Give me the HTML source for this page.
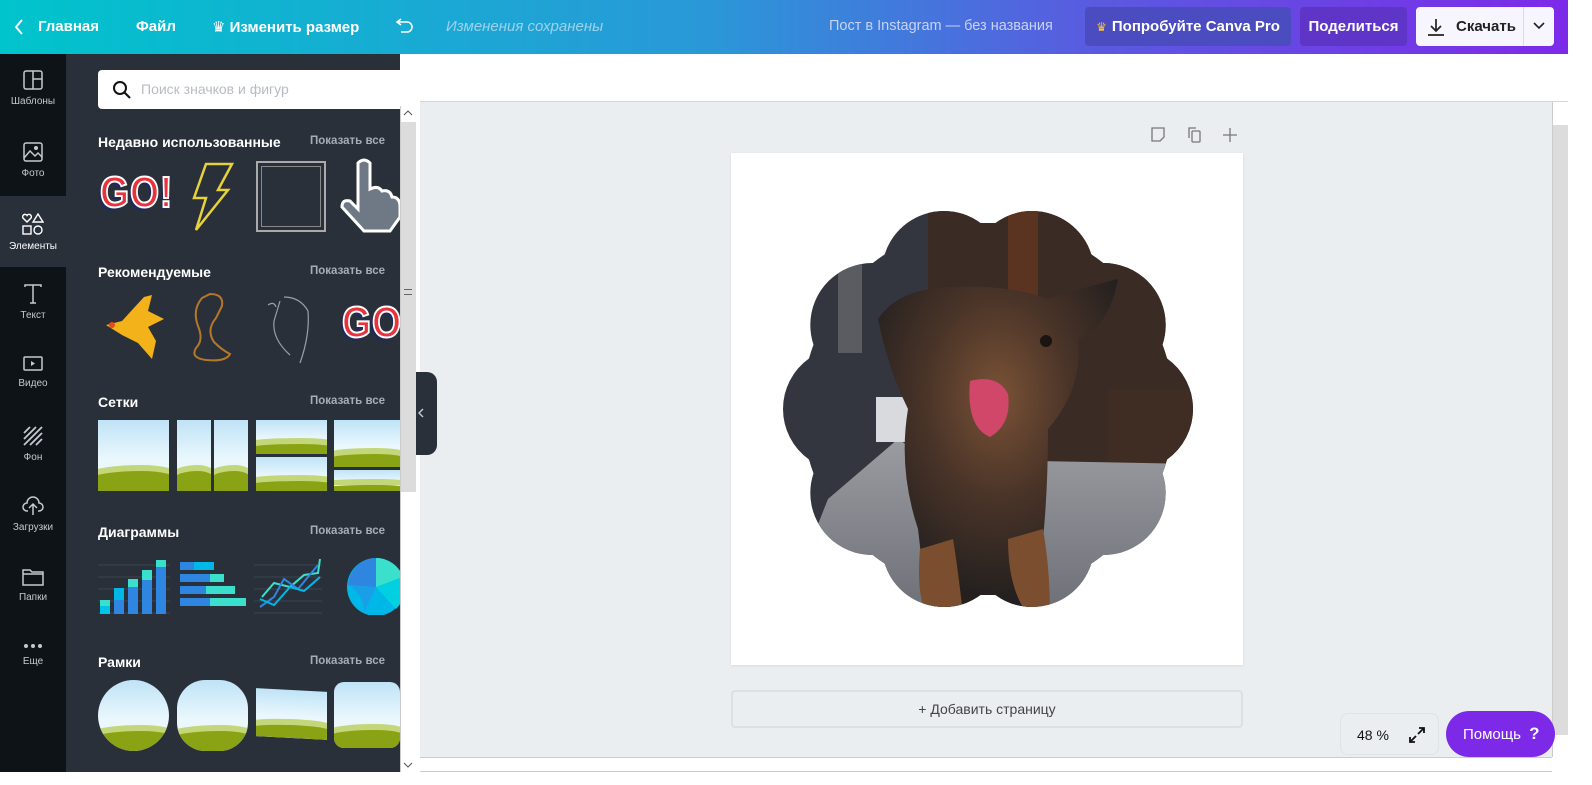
<!DOCTYPE html>
<html><head><meta charset="utf-8">
<style>
*{box-sizing:border-box;margin:0;padding:0}
body{width:1592px;height:785px;overflow:hidden;font-family:"Liberation Sans","DejaVu Sans",sans-serif;background:#fff;position:relative}
.top{position:absolute;left:0;top:0;width:1568px;height:54px;background:linear-gradient(90deg,#00c4cc 0%,#2a98d8 45%,#5a5ae0 70%,#7d2ae8 100%);color:#fff;font-weight:bold;font-size:15px}
.top span{position:absolute;top:18px}
.btn{position:absolute;top:7px;height:39px;border-radius:4px;display:flex;align-items:center;justify-content:center;font-size:15px;font-weight:bold}
.rail{position:absolute;left:0;top:54px;width:66px;height:731px;background:#0e1318}
.ri{position:absolute;left:0;width:66px;text-align:center;color:#c5c9cf;font-size:10px}
.ri svg{display:block;margin:0 auto 6px}
.panel{position:absolute;left:66px;top:54px;width:334px;height:731px;background:#293039}
.h{position:absolute;left:32px;color:#fff;font-weight:bold;font-size:14px}
.sa{position:absolute;left:244px;color:#a7adb5;font-size:11.5px;font-weight:bold}
.thumb{position:absolute;overflow:hidden;background:linear-gradient(#bfe3f7,#eaf7fd 55%)}
.thumb:after{content:"";position:absolute;left:-10%;right:-10%;bottom:0;height:28%;background:#8aa315;border-radius:60% 40% 0 0/40% 40% 0 0;box-shadow:0 -6px 0 #c3d77a}
.go{position:absolute;font-family:"Liberation Sans",sans-serif;font-weight:900;font-size:44px;color:#e8323c;-webkit-text-stroke:2px #fff;text-shadow:-3px 3px 0 #1e2a5a;letter-spacing:1px;transform:scaleX(.85);transform-origin:left}
</style></head><body>

<div class="top">
  <svg style="position:absolute;left:14px;top:19px" width="10" height="16"><path d="M8 1 L2 8 L8 15" stroke="#fff" stroke-width="2" fill="none"/></svg>
  <span style="left:38px">Главная</span>
  <span style="left:136px">Файл</span>
  <span style="left:212px">♛ Изменить размер</span>
  <svg style="position:absolute;left:396px;top:17px" width="18" height="16"><path d="M5 2 L1 5 L5 8 M1 5 H11 A5 5 0 0 1 11 15 H5" stroke="#fff" stroke-width="1.6" fill="none"/></svg>
  <span style="left:446px;font-weight:normal;font-style:italic;color:#9cd2ea">Изменения сохранены</span>
  <span style="left:829px;font-weight:normal;color:#c7d3f5;font-size:14.5px">Пост в Instagram — без названия</span>
  <div class="btn" style="left:1085px;width:206px;background:#4b4cc0"><span style="position:static;color:#ffc42b;margin-right:5px;font-size:12px">♛</span>Попробуйте Canva Pro</div>
  <div class="btn" style="left:1300px;width:107px;background:#5f35c8">Поделиться</div>
  <div class="btn" style="left:1416px;width:138px;background:#f7f5fd;color:#222;justify-content:flex-start;padding-left:10px">
    <svg width="20" height="20" style="margin-right:10px"><path d="M10 2 V14 M5 9 L10 14 L15 9 M2 18 H18" stroke="#222" stroke-width="1.7" fill="none"/></svg>Скачать
    <div style="position:absolute;left:107px;top:0;width:1px;height:39px;background:#ddd"></div>
    <svg style="position:absolute;left:117px;top:15px" width="12" height="8"><path d="M1 1 L6 6 L11 1" stroke="#222" stroke-width="1.6" fill="none"/></svg>
  </div>
</div>

<div class="rail">
  <div class="ri" style="top:16px"><svg width="20" height="20"><rect x="1" y="1" width="18" height="18" rx="2" stroke="#c5c9cf" fill="none" stroke-width="1.5"/><path d="M10 1 V19 M10 9 H19" stroke="#c5c9cf" stroke-width="1.5"/></svg>Шаблоны</div>
  <div class="ri" style="top:88px"><svg width="20" height="20"><rect x="1" y="1" width="18" height="18" rx="2" stroke="#c5c9cf" fill="none" stroke-width="1.5"/><path d="M1 16 L7 9 L12 14 L15 11 L19 15" stroke="#c5c9cf" fill="none" stroke-width="1.5"/><circle cx="13" cy="6" r="2" fill="#c5c9cf"/></svg>Фото</div>
  <div style="position:absolute;left:0;top:142px;width:66px;height:71px;background:#293039"></div>
  <div class="ri" style="top:159px;color:#fff"><svg width="22" height="22"><path d="M5 9 L1 5 A2.3 2.3 0 0 1 5 2.5 A2.3 2.3 0 0 1 9 5 Z" stroke="#fff" fill="none" stroke-width="1.4"/><path d="M16 1 L21 9 H11 Z" stroke="#fff" fill="none" stroke-width="1.4"/><rect x="1" y="13" width="8" height="8" stroke="#fff" fill="none" stroke-width="1.4"/><circle cx="16" cy="17" r="4" stroke="#fff" fill="none" stroke-width="1.4"/></svg>Элементы</div>
  <div class="ri" style="top:230px"><svg width="20" height="20"><path d="M2 3 V1 H18 V3 M10 1 V19 M7 19 H13" stroke="#c5c9cf" stroke-width="1.5" fill="none"/></svg>Текст</div>
  <div class="ri" style="top:302px"><svg width="20" height="16"><rect x="1" y="1" width="18" height="13" rx="1" stroke="#c5c9cf" fill="none" stroke-width="1.5"/><path d="M8 5 L12 7.5 L8 10Z" fill="#c5c9cf"/></svg>Видео</div>
  <div class="ri" style="top:372px"><svg width="20" height="20"><path d="M1 7 L7 1 M1 13 L13 1 M1 19 L19 1 M7 19 L19 7 M13 19 L19 13" stroke="#c5c9cf" stroke-width="1.8"/></svg>Фон</div>
  <div class="ri" style="top:442px"><svg width="22" height="20"><path d="M6 15 H5 A4 4 0 0 1 5 7 A6 6 0 0 1 17 7 A4 4 0 0 1 17 15 H16 M11 19 V9 M7 12 L11 8 L15 12" stroke="#c5c9cf" stroke-width="1.5" fill="none"/></svg>Загрузки</div>
  <div class="ri" style="top:514px"><svg width="22" height="18"><path d="M1 2 H8 L10 4 H21 V17 H1 Z M1 6 H21" stroke="#c5c9cf" stroke-width="1.5" fill="none"/></svg>Папки</div>
  <div class="ri" style="top:588px"><svg width="20" height="8"><circle cx="3" cy="4" r="2" fill="#c5c9cf"/><circle cx="10" cy="4" r="2" fill="#c5c9cf"/><circle cx="17" cy="4" r="2" fill="#c5c9cf"/></svg>Еще</div>
</div>

<div class="panel">
  <div style="position:absolute;left:32px;top:16px;width:307px;height:39px;background:#fff;border-radius:4px">
    <svg style="position:absolute;left:14px;top:10px" width="20" height="20"><circle cx="8" cy="8" r="6" stroke="#111" stroke-width="2" fill="none"/><path d="M12.5 12.5 L18 18" stroke="#111" stroke-width="2.2"/></svg>
    <span style="position:absolute;left:43px;top:11px;color:#b8bcc2;font-size:14px">Поиск значков и фигур</span>
  </div>
  <div class="h" style="top:80px">Недавно использованные</div><div class="sa" style="top:81px">Показать все</div>
  <div class="go" style="left:34px;top:114px">GO!</div>
  <svg style="position:absolute;left:122px;top:108px" width="50" height="72"><path d="M18 2 H44 L30 28 H40 L8 68 L18 36 H6 Z" stroke="#e6d23a" stroke-width="2.5" fill="none"/></svg>
  <div style="position:absolute;left:190px;top:107px;width:70px;height:71px;border:2px solid #aaa"><div style="position:absolute;inset:3px;border:1.5px solid #888"></div></div>
  <svg style="position:absolute;left:272px;top:103px" width="62" height="78"><path d="M20 6 Q26 0 32 6 V32 Q40 28 44 34 Q52 32 54 40 Q62 40 62 50 V60 L52 74 H26 L4 50 Q4 42 12 44 L20 52 Z" fill="#6f7985" stroke="#fff" stroke-width="3"/></svg>
  <div class="h" style="top:210px">Рекомендуемые</div><div class="sa" style="top:211px">Показать все</div>
  <svg style="position:absolute;left:38px;top:237px" width="60" height="72"><path d="M2 34 L18 30 L40 6 L48 4 L44 20 L60 28 L44 36 L52 50 L48 68 L34 52 L18 44 Z" fill="#f4b21a"/><circle cx="8" cy="34" r="3" fill="#e64a19"/></svg>
  <svg style="position:absolute;left:120px;top:236px" width="50" height="74"><path d="M24 4 Q38 4 36 16 L30 28 Q20 40 28 52 Q36 60 44 64 Q40 72 20 70 Q4 68 10 58 Q18 50 12 36 Q6 20 16 8 Z" stroke="#b5772a" stroke-width="2" fill="none"/></svg>
  <svg style="position:absolute;left:198px;top:237px" width="50" height="74"><path d="M20 6 Q36 6 44 20 Q46 44 36 72 M16 10 L10 30 Q8 48 26 64 M4 14 Q10 10 12 16" stroke="#9aa0a8" stroke-width="1.2" fill="none"/></svg>
  <div class="go" style="left:276px;top:244px">GO!</div>
  <div class="h" style="top:340px">Сетки</div><div class="sa" style="top:341px">Показать все</div>
  <div class="thumb" style="left:32px;top:366px;width:71px;height:71px"></div>
  <div class="thumb" style="left:111px;top:366px;width:34px;height:71px"></div>
  <div class="thumb" style="left:148px;top:366px;width:34px;height:71px"></div>
  <div class="thumb" style="left:190px;top:366px;width:71px;height:34px"></div>
  <div class="thumb" style="left:190px;top:403px;width:71px;height:34px"></div>
  <div class="thumb" style="left:268px;top:366px;width:66px;height:47px"></div>
  <div class="thumb" style="left:268px;top:416px;width:66px;height:21px"></div>
  <div class="h" style="top:470px">Диаграммы</div><div class="sa" style="top:471px">Показать все</div>
  <svg style="position:absolute;left:32px;top:503px" width="304" height="58">
    <g stroke="#3b4450" stroke-width="1"><path d="M0 8H72M0 20H72M0 32H72M0 44H72M0 56H72M156 8H224M156 20H224M156 32H224M156 44H224M156 56H224"/></g>
    <rect x="2" y="43" width="10" height="14" fill="#00c4e8"/><rect x="2" y="43" width="10" height="6" fill="#3ae0cc"/>
    <rect x="16" y="31" width="10" height="26" fill="#2f86e0"/><rect x="16" y="31" width="10" height="12" fill="#00b8e8"/>
    <rect x="30" y="22" width="10" height="35" fill="#2f86e0"/><rect x="30" y="22" width="10" height="8" fill="#3ae0cc"/>
    <rect x="44" y="13" width="10" height="44" fill="#2f86e0"/><rect x="44" y="13" width="10" height="10" fill="#3ae0cc"/>
    <rect x="58" y="3" width="10" height="54" fill="#2f86e0"/><rect x="58" y="3" width="10" height="7" fill="#3ae0cc"/>
    <rect x="82" y="5" width="34" height="8" fill="#00b8e8"/><rect x="82" y="5" width="14" height="8" fill="#2f86e0"/>
    <rect x="82" y="17" width="44" height="8" fill="#3ae0cc"/><rect x="82" y="17" width="30" height="8" fill="#2f86e0"/>
    <rect x="82" y="29" width="55" height="8" fill="#3ae0cc"/><rect x="82" y="29" width="26" height="8" fill="#2f86e0"/>
    <rect x="82" y="41" width="66" height="8" fill="#3ae0cc"/><rect x="82" y="41" width="30" height="8" fill="#2f86e0"/>
    <path d="M8 40 L20 26 L36 30 L50 18 L64 16 L66 2" transform="translate(156 0)" stroke="#3ae0cc" stroke-width="2" fill="none"/>
    <path d="M6 50 L20 40 L30 22 L44 32 L64 8" transform="translate(156 0)" stroke="#2f86e0" stroke-width="2" fill="none"/>
    <path d="M6 42 L20 48 L36 30 L50 34 L66 20" transform="translate(156 0)" stroke="#00b8e8" stroke-width="2" fill="none"/>
    <circle cx="278" cy="30" r="29" fill="#00b8e8"/>
    <path d="M278 30 L278 1 A29 29 0 0 1 305 20 Z" fill="#3ae0cc"/>
    <path d="M278 30 L305 20 A29 29 0 0 1 298 52 Z" fill="#00d0e0"/>
    <path d="M278 30 L250 28 A29 29 0 0 1 278 1 Z" fill="#2f86e0"/>
    <path d="M278 30 L250 28 A29 29 0 0 1 266 56 Z" fill="#1a9ee8"/>
  </svg>
  <div class="h" style="top:600px">Рамки</div><div class="sa" style="top:601px">Показать все</div>
  <div class="thumb" style="left:32px;top:626px;width:71px;height:71px;border-radius:50%"></div>
  <div class="thumb" style="left:111px;top:626px;width:71px;height:71px;border-radius:40%"></div>
  <div class="thumb" style="left:190px;top:636px;width:71px;height:48px;transform:skewY(3deg)"></div>
  <div class="thumb" style="left:268px;top:628px;width:66px;height:66px;border-radius:10px"></div>
</div>
<div style="position:absolute;left:400px;top:106px;width:16px;height:666px;background:#fff;border-left:1px solid #ccc"></div>
<div style="position:absolute;left:401px;top:122px;width:15px;height:370px;background:#dcdcdc"></div>
<svg style="position:absolute;left:403px;top:109px" width="10" height="8"><path d="M1 6 L5 2 L9 6" stroke="#555" fill="none"/></svg>
<svg style="position:absolute;left:403px;top:761px" width="10" height="8"><path d="M1 2 L5 6 L9 2" stroke="#555" fill="none"/></svg>
<div style="position:absolute;left:404px;top:289px;width:8px;height:6px;border-top:1px solid #666;border-bottom:1px solid #666"></div>

<!-- canvas -->
<div style="position:absolute;left:420px;top:54px;width:1148px;height:48px;background:#fff;border-bottom:1px solid #d4d6d9"></div>
<div style="position:absolute;left:420px;top:102px;width:1132px;height:655px;background:#ebeef1"></div>
<div style="position:absolute;left:416px;top:372px;width:21px;height:83px;background:#293039;border-radius:0 10px 10px 0"></div>
<svg style="position:absolute;left:417px;top:408px" width="8" height="10"><path d="M6 1 L2 5 L6 9" stroke="#ccc" fill="none" stroke-width="1.4"/></svg>
<div style="position:absolute;left:1552px;top:102px;width:16px;height:655px;background:#fff;border-left:1px solid #ccc"></div>
<div style="position:absolute;left:1553px;top:125px;width:15px;height:610px;background:#dcdcdc"></div>
<div style="position:absolute;left:420px;top:757px;width:1132px;height:15px;background:#fff;border-top:1px solid #ccc;border-bottom:1px solid #ccc"></div>
<div style="position:absolute;left:0;top:772px;width:1592px;height:13px;background:#fff"></div>

<svg style="position:absolute;left:1150px;top:126px" width="90" height="18">
  <path d="M2 2 H14 V11 L10 15 H2 Z" stroke="#777" fill="none" stroke-width="1.3"/>
  <rect x="42" y="5" width="8" height="11" rx="1" stroke="#777" fill="none" stroke-width="1.3"/><path d="M39 12 V2 H46" stroke="#777" fill="none" stroke-width="1.3"/>
  <path d="M80 2 V16 M73 9 H87" stroke="#777" stroke-width="1.3"/>
</svg>
<div style="position:absolute;left:731px;top:153px;width:512px;height:512px;background:#fff;box-shadow:0 1px 3px rgba(0,0,0,.08)"></div>
<svg style="position:absolute;left:782px;top:203px" width="412" height="412" viewBox="-206 -206 412 412">
  <defs>
    <clipPath id="sc"><circle r="186"/>
      <circle cx="143" cy="0" r="62"/><circle cx="115.7" cy="84" r="62"/><circle cx="44.2" cy="136" r="62"/><circle cx="-44.2" cy="136" r="62"/><circle cx="-115.7" cy="84" r="62"/><circle cx="-143" cy="0" r="62"/><circle cx="-115.7" cy="-84" r="62"/><circle cx="-44.2" cy="-136" r="62"/><circle cx="44.2" cy="-136" r="62"/><circle cx="115.7" cy="-84" r="62"/>
    </clipPath>
    <radialGradient id="fur" cx="50%" cy="35%" r="60%"><stop offset="0" stop-color="#7a5236"/><stop offset=".5" stop-color="#4a3428"/><stop offset="1" stop-color="#24201f"/></radialGradient>
    <linearGradient id="floor" x1="0" y1="0" x2="0" y2="1"><stop offset="0" stop-color="#9a9ca2"/><stop offset="1" stop-color="#6d6f76"/></linearGradient>
  </defs>
  <g clip-path="url(#sc)">
    <rect x="-206" y="-206" width="412" height="412" fill="#34363f"/>
    <rect x="-60" y="-206" width="266" height="270" fill="#3a2b24"/>
    <rect x="20" y="-206" width="30" height="160" fill="#5a3420"/>
    <rect x="120" y="-20" width="86" height="80" fill="#3f2c22"/>
    <rect x="-150" y="-206" width="24" height="150" fill="#5a5c62"/>
    <path d="M-206 206 L-160 90 L-90 30 L-60 50 L206 55 V206 Z" fill="url(#floor)"/>
    <rect x="-112" y="-12" width="40" height="45" fill="#d8dadd"/>
    <path d="M-110 -90 Q-90 -120 -40 -122 Q20 -125 60 -110 Q90 -120 130 -130 Q120 -80 90 -70 Q95 -20 60 20 Q60 80 55 130 L45 206 H-60 L-70 120 Q-90 60 -80 0 Q-100 -40 -110 -90 Z" fill="url(#fur)"/>
    <path d="M-68 140 Q-72 190 -60 206 H-25 Q-30 160 -35 130 Z M20 130 Q20 180 40 206 H62 Q62 160 55 120Z" fill="#7a4e2e"/>
    <circle cx="58" cy="-68" r="6" fill="#1a1412"/>
    <path d="M-18 -28 Q10 -35 20 -15 Q24 15 2 28 Q-22 18 -18 -28 Z" fill="#d0476a"/>
  </g>
</svg>
<div style="position:absolute;left:731px;top:690px;width:512px;height:38px;border:2px solid #dcdfe3;border-radius:4px;text-align:center;line-height:34px;color:#444;font-size:14px">+ Добавить страницу</div>
<div style="position:absolute;left:1340px;top:713px;width:99px;height:42px;border:1px solid #dfe2e6;border-radius:8px;background:#ebeef1">
  <span style="position:absolute;left:16px;top:13px;font-size:14px;color:#111">48 %</span>
  <svg style="position:absolute;left:67px;top:12px" width="18" height="18"><path d="M10 8 L16 2 M11 2 H16 V7 M8 10 L2 16 M2 11 V16 H7" stroke="#111" stroke-width="1.8" fill="none"/></svg>
</div>
<div style="position:absolute;left:1446px;top:711px;width:109px;height:46px;border-radius:23px;background:#7d2ae8;color:#fff;font-size:15px;line-height:46px;padding-left:17px">Помощь <b style="margin-left:4px;font-size:17px">?</b></div>
</body></html>
